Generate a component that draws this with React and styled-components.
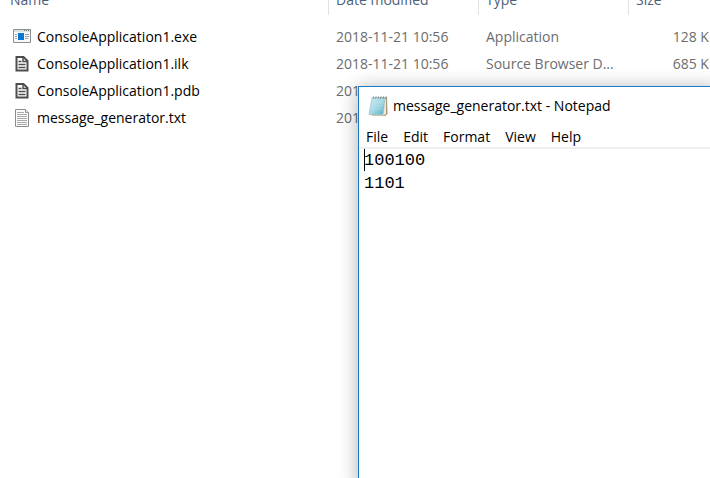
import React from "react";
import styled, { createGlobalStyle } from "styled-components";

const GlobalStyle = createGlobalStyle`
  * { box-sizing: border-box; }
  body {
    margin: 0;
    background: #fff;
    font-family: "Open Sans", "Noto Sans", sans-serif;
    font-size: 14px;
    line-height: 20px;
  }
`;

const Desktop = styled.main`
  position: relative;
  min-height: 100vh;
  overflow: hidden;
  background: #fff;
`;

const FileTable = styled.table`
  width: calc(100% + 8px);
  table-layout: fixed;
  border-collapse: collapse;
`;

const Column = styled.col`
  width: ${(p) => p.$width || "auto"};
`;

const HeaderCell = styled.th`
  height: 23px;
  padding: 0;
  vertical-align: top;
  text-align: left;
  font-weight: 400;
  color: #4c607a;
`;

const HeaderLabel = styled.div`
  display: flex;
  align-items: flex-end;
  height: 15px;
  padding: 0 0 5px ${(p) => (p.$first ? "10px" : "7px")};
  border-left: ${(p) => (p.$first ? "0" : "1px solid #e2e2e2")};
`;

const Cell = styled.td`
  height: 27px;
  padding: 0 0 0 8px;
  color: #6d6d6d;
  white-space: nowrap;
  text-align: ${(p) => (p.$right ? "right" : "left")};
`;

const NameCell = styled(Cell)`
  padding-left: 12px;
  color: #000;
`;

const FileName = styled.span`
  display: flex;
  align-items: center;
  gap: 5px;
`;

const Icon = styled.svg`
  display: block;
  flex: none;
`;

const Notepad = styled.section`
  position: absolute;
  top: 86px;
  right: -8px;
  bottom: -8px;
  left: 358px;
  display: flex;
  flex-direction: column;
  background: #fff;
  border: 1px solid #1779ca;
  box-shadow: 0 2px 18px rgba(0, 0, 0, 0.32);
`;

const TitleBar = styled.header`
  display: flex;
  align-items: center;
  gap: 4px;
  height: 38px;
  padding-left: 9px;
`;

const Title = styled.h1`
  margin: 0;
  font-size: 14px;
  font-weight: 400;
`;

const MenuBar = styled.nav`
  display: flex;
  align-items: flex-end;
  gap: 15px;
  height: 24px;
  padding-left: 7px;
  border-bottom: 2px solid #f0f0f0;
`;

const MenuButton = styled.button`
  padding: 0;
  border: 0;
  background: none;
  color: #000;
  font: inherit;
`;

const Editor = styled.div`
  position: relative;
  flex: 1;
  display: flex;
`;

const TextArea = styled.textarea`
  flex: 1;
  padding: 0 0 0 5px;
  border: 0;
  outline: 0;
  resize: none;
  background: transparent;
  color: #000;
  font-family: "Liberation Mono", monospace;
  font-size: 17px;
  line-height: 23px;
`;

const Caret = styled.span`
  position: absolute;
  top: 0;
  left: 5px;
  width: 1px;
  height: 22px;
  background: #000;
`;

function ExeIcon() {
  return (
    <Icon width="20" height="18" viewBox="0 0 20 18" aria-hidden="true">
      <path d="M1.5 1.5h17v13h-17z" fill="#f8f8f8" stroke="#8b8f91" />
      <path d="M2 2h16v2H2z" fill="#dfe2e3" />
      <path d="M12 2.5h1M14 2.5h1M16 2.5h1" stroke="#777" />
      <path d="M3 6.5h2M3 8.5h2M3 10.5h2M13 6.5h4M13 8.5h4M13 10.5h3" stroke="#9b9fa1" />
      <path d="M6 5h6v7H6z" fill="#0878d7" />
    </Icon>
  );
}

function DocIcon() {
  return (
    <Icon width="20" height="18" viewBox="0 0 20 18" aria-hidden="true">
      <path d="M4.5 2h7l4 4v9.5h-11z" fill="#fff" stroke="#4d4d4d" strokeWidth="2" />
      <path d="M11 2v4.5h5" fill="none" stroke="#4d4d4d" strokeWidth="1.5" />
      <path d="M6.5 6.5h3M6.5 9.5h7M6.5 12.5h7" stroke="#4d4d4d" strokeWidth="1.5" />
    </Icon>
  );
}

function TextIcon() {
  return (
    <Icon width="20" height="20" viewBox="0 0 20 20" aria-hidden="true">
      <path d="M3.5 1.5h10l3 3v14h-13z" fill="#fbfbfb" stroke="#8d8d8d" />
      <path d="M13.5 1.5v3h3" fill="#e5e5e5" stroke="#999" />
      <path d="M5 4.5h7M5 6.5h10M5 8.5h10M5 10.5h10M5 12.5h10M5 14.5h10M5 16.5h10" stroke="#aaa" />
    </Icon>
  );
}

function NotepadIcon() {
  return (
    <Icon width="21" height="22" viewBox="0 0 21 22" aria-hidden="true">
      <defs>
        <linearGradient id="paper" x1="0" y1="0" x2="1" y2="1">
          <stop offset="0" stopColor="#cdeef5" />
          <stop offset="0.5" stopColor="#a4d9e5" />
          <stop offset="1" stopColor="#55abc0" />
        </linearGradient>
      </defs>
      <path d="M5 3l14-1 .5 17-2.500 2H4z" fill="#a99873" />
      <path d="M5 3l13-1v17l-3 1.500H3z" fill="#eee9da" />
      <path d="M4 3h13l-2 16.500H1z" fill="url(#paper)" stroke="#8bb9c2" strokeWidth="0.6" />
      <path d="M4 8h12M3.500 11h12M3 14h12" stroke="#bce2e9" strokeWidth="0.5" />
      <path d="M5 3.500l.7-2M7.500 3.500l.7-2M10 3.500l.7-2M12.500 3.500l.7-2M15 3.500l.7-2M17.500 3.500l.5-2" stroke="#66777a" />
    </Icon>
  );
}

const files = [
  { name: "ConsoleApplication1.exe", icon: ExeIcon, date: "2018-11-21 10:56", type: "Application", size: "128 KB" },
  { name: "ConsoleApplication1.ilk", icon: DocIcon, date: "2018-11-21 10:56", type: "Source Browser D...", size: "685 KB" },
  { name: "ConsoleApplication1.pdb", icon: DocIcon, date: "2018-11-21 10:56", type: "", size: "" },
  { name: "message_generator.txt", icon: TextIcon, date: "2018-11-21 10:56", type: "", size: "" },
];

const headings = ["Name", "Date modified", "Type", "Size"];
const menus = ["File", "Edit", "Format", "View", "Help"];

export default function App() {
  return (
    <Desktop>
      <GlobalStyle />
      <FileTable>
        <colgroup>
          <Column $width="328px" />
          <Column $width="150px" />
          <Column $width="150px" />
          <Column />
        </colgroup>
        <thead>
          <tr>
            {headings.map((heading, i) => (
              <HeaderCell key={heading} scope="col">
                <HeaderLabel $first={i === 0}>{heading}</HeaderLabel>
              </HeaderCell>
            ))}
          </tr>
        </thead>
        <tbody>
          {files.map(({ name, icon: FileIcon, date, type, size }) => (
            <tr key={name}>
              <NameCell>
                <FileName>
                  <FileIcon />
                  {name}
                </FileName>
              </NameCell>
              <Cell>{date}</Cell>
              <Cell>{type}</Cell>
              <Cell $right>{size}</Cell>
            </tr>
          ))}
        </tbody>
      </FileTable>
      <Notepad aria-label="Notepad">
        <TitleBar>
          <NotepadIcon />
          <Title>message_generator.txt - Notepad</Title>
        </TitleBar>
        <MenuBar>
          {menus.map((menu) => (
            <MenuButton key={menu} type="button">{menu}</MenuButton>
          ))}
        </MenuBar>
        <Editor>
          <TextArea aria-label="Document text" spellCheck={false} defaultValue={"100100\n1101"} />
          <Caret />
        </Editor>
      </Notepad>
    </Desktop>
  );
}
